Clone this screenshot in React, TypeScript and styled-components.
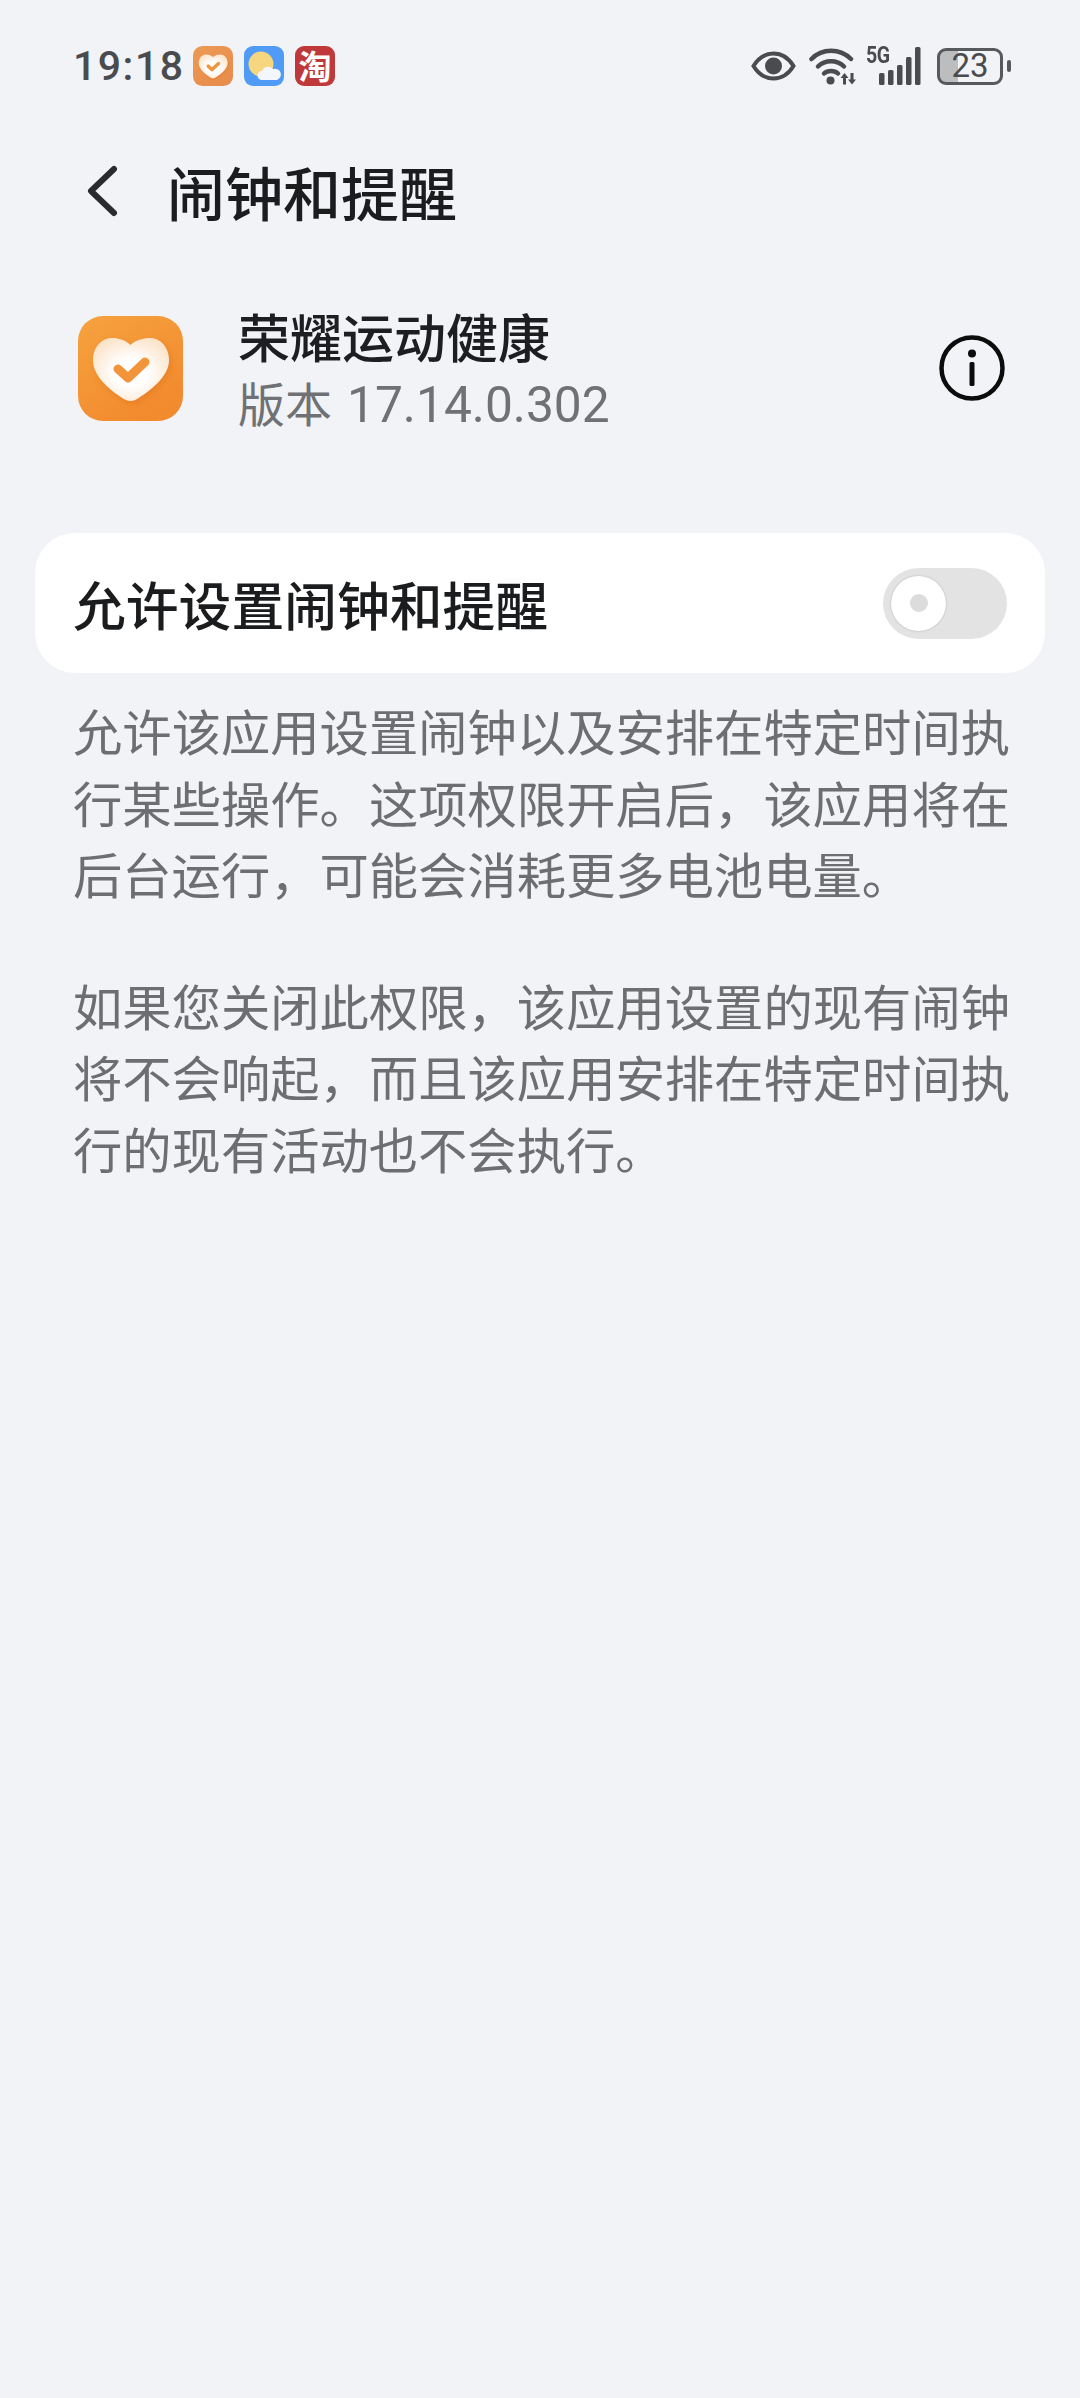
import React from "react";
import styled, { createGlobalStyle } from "styled-components";

const GlobalStyle = createGlobalStyle`
  html, body {
    margin: 0;
    padding: 0;
    background: #f1f3f7;
  }
  * {
    box-sizing: border-box;
  }
`;

const Page = styled.div`
  width: 1080px;
  height: 2398px;
  overflow: hidden;
  background: #f1f3f7;
  font-family: "Noto Sans CJK SC", "Noto Sans", sans-serif;
`;

const StatusBar = styled.div`
  height: 127px;
  padding: 46px 77px 0 73px;
  display: flex;
  justify-content: space-between;
  align-items: flex-start;
`;

const StatusLeft = styled.div`
  display: flex;
  align-items: center;
  height: 40px;
`;

const Time = styled.div`
  font-family: "Roboto", sans-serif;
  font-size: 41px;
  font-weight: 500;
  letter-spacing: 1.5px;
  color: #4a4b4e;
  line-height: 40px;
  width: 120px;
`;

const NotifyIcons = styled.div`
  display: flex;
  gap: 11px;
`;

const StatusRight = styled.div`
  display: flex;
  align-items: center;
  height: 40px;
  gap: 13px;
`;

const Header = styled.div`
  height: 130px;
  padding: 0 0 3px 84px;
  display: flex;
  align-items: center;
`;

const BackButton = styled.div`
  width: 83px;
  display: flex;
`;

const Title = styled.h1`
  margin: 0;
  font-size: 58px;
  font-weight: 500;
  color: #1b1c1e;
  line-height: 1;
`;

const AppRow = styled.div`
  margin-top: 46px;
  padding: 0 74px 0 78px;
  display: flex;
  align-items: center;
  height: 130px;
`;

const AppText = styled.div`
  margin-left: 55px;
  padding-top: 6px;
  flex: 1;
`;

const AppName = styled.div`
  font-size: 52px;
  font-weight: 500;
  color: #1d1e20;
  line-height: 66px;
`;

const AppVersion = styled.div`
  font-size: 47px;
  color: #6f7175;
  line-height: 70px;
  margin-top: -2px;
  display: flex;
  align-items: baseline;
`;

const VersionNumber = styled.span`
  font-family: "Roboto", sans-serif;
  font-size: 49.7px;
  margin-left: 15px;
`;

const Card = styled.div`
  margin: 100px 35px 0;
  height: 140px;
  border-radius: 40px;
  background: #fff;
  padding: 0 38px;
  display: flex;
  justify-content: space-between;
  align-items: center;
`;

const CardLabel = styled.div`
  font-size: 52.8px;
  font-weight: 500;
  color: #1b1c1e;
`;

const Switch = styled.div`
  width: 124px;
  height: 71px;
  border-radius: 36px;
  background: #e3e3e4;
  padding: 8px;
  display: flex;
`;

const SwitchKnob = styled.div`
  width: 55px;
  height: 55px;
  border-radius: 50%;
  background: #fff;
  box-shadow: 0 0 2px rgba(0, 0, 0, 0.25);
  display: flex;
  align-items: center;
  justify-content: center;
  &::after {
    content: "";
    width: 18px;
    height: 18px;
    border-radius: 50%;
    background: #dcdcdd;
  }
`;

const Description = styled.div`
  padding: 21px 70px 0 73px;
  font-size: 49.3px;
  line-height: 71.5px;
  color: #6c6e72;
  text-align: justify;
`;

const Paragraph = styled.p`
  margin: 0 0 60px;
`;

const HealthIcon = ({ size, muted }: { size: number; muted?: boolean }) => (
  <svg width={size} height={size} viewBox="0 0 105 105">
    <defs>
      <linearGradient id={`bg${size}`} x1="0" y1="0" x2="0.6" y2="1">
        <stop offset="0" stopColor={muted ? "#ec9a55" : "#f6a23f"} />
        <stop offset="1" stopColor={muted ? "#e98d4c" : "#f28a2e"} />
      </linearGradient>
      <radialGradient id={`hg${size}`} cx="0.5" cy="0.55" r="0.6">
        <stop offset="0.35" stopColor="#ffffff" />
        <stop offset="1" stopColor="#fbe3c8" />
      </radialGradient>
      <filter id={`hs${size}`} x="-20%" y="-20%" width="140%" height="140%">
        <feDropShadow dx="2" dy="3" stdDeviation="3" floodColor="#d9701c" floodOpacity="0.45" />
      </filter>
    </defs>
    <rect width="105" height="105" rx="25" fill={`url(#bg${size})`} />
    <path
      d="M52.500 29 C58 24 65 22 72 22 C83 22 91 32 91 44 C91 58 78 71 59 83 Q52.500 87 46 83 C27 71 15 58 15 44 C15 32 23 22 34 22 C41 22 47 24 52.500 29 Z"
      fill={`url(#hg${size})`}
      filter={`url(#hs${size})`}
    />
    <path
      d="M40 53 L50 62 L67 46"
      fill="none"
      stroke="#f2953a"
      strokeWidth="9"
      strokeLinecap="round"
      strokeLinejoin="round"
    />
  </svg>
);

const WeatherIcon = () => (
  <svg width="40" height="40" viewBox="0 0 40 40">
    <rect width="40" height="40" rx="9" fill="#4f9bf5" />
    <circle cx="17" cy="18" r="12.500" fill="#f6d67e" />
    <path
      d="M18 34 a4.500 4.500 0 0 1 0-9 a6.500 6.500 0 0 1 11-2 a5.500 5.500 0 0 1 4 11 Z"
      fill="#f3f6fb"
    />
  </svg>
);

const TaobaoBadge = styled.div`
  width: 40px;
  height: 40px;
  border-radius: 9px;
  background: #c0393a;
  color: #fff;
  font-size: 33px;
  font-weight: 700;
  line-height: 38px;
  text-align: center;
`;

const EyeIcon = () => (
  <svg width="45" height="30" viewBox="0 0 45 30">
    <path
      d="M2.500 15 C8 6 15 2.500 22.500 2.500 C30 2.500 37 6 42.500 15 C37 24 30 27.500 22.500 27.500 C15 27.500 8 24 2.500 15 Z"
      fill="none"
      stroke="#4a4b4e"
      strokeWidth="4"
    />
    <circle cx="22.500" cy="15" r="8.500" fill="#4a4b4e" />
  </svg>
);

const WifiIcon = () => (
  <svg width="48" height="37" viewBox="0 0 48 37">
    <g fill="none" stroke="#4a4b4e" strokeWidth="4.500" strokeLinecap="round">
      <path d="M2.500 11 C13 0 31 0 42 11" />
      <path d="M9 18.500 C16 11.500 28 11.500 35 18.500" />
      <path d="M15 25.500 C18.500 22 25.500 22 29 25.500" />
    </g>
    <circle cx="21.500" cy="32.500" r="4" fill="#4a4b4e" />
    <path d="M35.500 25 L31.500 30 H34 V36.500 H37 V30 H39.500 Z M43 36.500 L47 31.500 H44.500 V25 H41.500 V31.500 H39 Z" fill="#4a4b4e" />
  </svg>
);

const NetworkWrap = styled.div`
  position: relative;
  width: 56px;
  height: 38px;
  margin-left: -4px;
`;

const FiveG = styled.span`
  position: absolute;
  left: 0;
  top: -3px;
  font-family: "Roboto", sans-serif;
  font-size: 23px;
  font-weight: 700;
  line-height: 24px;
  letter-spacing: -0.5px;
  transform: scaleX(0.85);
  transform-origin: left;
  color: #4a4b4e;
`;

const SignalIcon = () => (
  <svg width="56" height="38" viewBox="0 0 56 38">
    <g fill="#4a4b4e">
      <rect x="13" y="26" width="5.500" height="12" rx="1.500" />
      <rect x="22" y="23" width="5.500" height="15" rx="1.500" />
      <rect x="31" y="18" width="5.500" height="20" rx="1.500" />
      <rect x="40" y="10" width="5.500" height="28" rx="1.500" />
      <rect x="49" y="0" width="5.500" height="38" rx="1.500" />
    </g>
  </svg>
);

const Battery = styled.div`
  position: relative;
  margin-left: 2px;
  width: 66px;
  height: 37px;
  border: 3.5px solid #58595c;
  border-radius: 9px;
  background: linear-gradient(90deg, #bcbdbf 0 18px, transparent 18px);
  color: #4a4b4e;
  font-family: "Roboto", sans-serif;
  font-size: 33px;
  line-height: 30px;
  text-align: center;
  &::after {
    content: "";
    position: absolute;
    right: -11px;
    top: 9px;
    width: 4.5px;
    height: 12px;
    border-radius: 2px;
    background: #58595c;
  }
`;

const BackIcon = () => (
  <svg width="36" height="52" viewBox="0 0 36 52">
    <path
      d="M30 4 L7 26 L30 48"
      fill="none"
      stroke="#2a2b2d"
      strokeWidth="6"
      strokeLinecap="round"
      strokeLinejoin="round"
    />
  </svg>
);

const InfoIcon = () => (
  <svg width="68" height="68" viewBox="0 0 68 68">
    <circle cx="34" cy="34" r="30.500" fill="none" stroke="#0c0c0c" strokeWidth="4.500" />
    <circle cx="34" cy="19.500" r="4" fill="#0c0c0c" />
    <rect x="31.500" y="28" width="5" height="24" rx="1.500" fill="#0c0c0c" />
  </svg>
);

export default function App() {
  return (
    <Page>
      <GlobalStyle />
      <StatusBar>
        <StatusLeft>
          <Time>19:18</Time>
          <NotifyIcons>
            <HealthIcon size={40} muted />
            <WeatherIcon />
            <TaobaoBadge>淘</TaobaoBadge>
          </NotifyIcons>
        </StatusLeft>
        <StatusRight>
          <EyeIcon />
          <WifiIcon />
          <NetworkWrap>
            <FiveG>5G</FiveG>
            <SignalIcon />
          </NetworkWrap>
          <Battery>23</Battery>
        </StatusRight>
      </StatusBar>
      <Header>
        <BackButton>
          <BackIcon />
        </BackButton>
        <Title>闹钟和提醒</Title>
      </Header>
      <AppRow>
        <HealthIcon size={105} />
        <AppText>
          <AppName>荣耀运动健康</AppName>
          <AppVersion>
            版本<VersionNumber>17.14.0.302</VersionNumber>
          </AppVersion>
        </AppText>
        <InfoIcon />
      </AppRow>
      <Card>
        <CardLabel>允许设置闹钟和提醒</CardLabel>
        <Switch>
          <SwitchKnob />
        </Switch>
      </Card>
      <Description>
        <Paragraph>
          允许该应用设置闹钟以及安排在特定时间执行某些操作。这项权限开启后，该应用将在后台运行，可能会消耗更多电池电量。
        </Paragraph>
        <Paragraph>
          如果您关闭此权限，该应用设置的现有闹钟将不会响起，而且该应用安排在特定时间执行的现有活动也不会执行。
        </Paragraph>
      </Description>
    </Page>
  );
}
